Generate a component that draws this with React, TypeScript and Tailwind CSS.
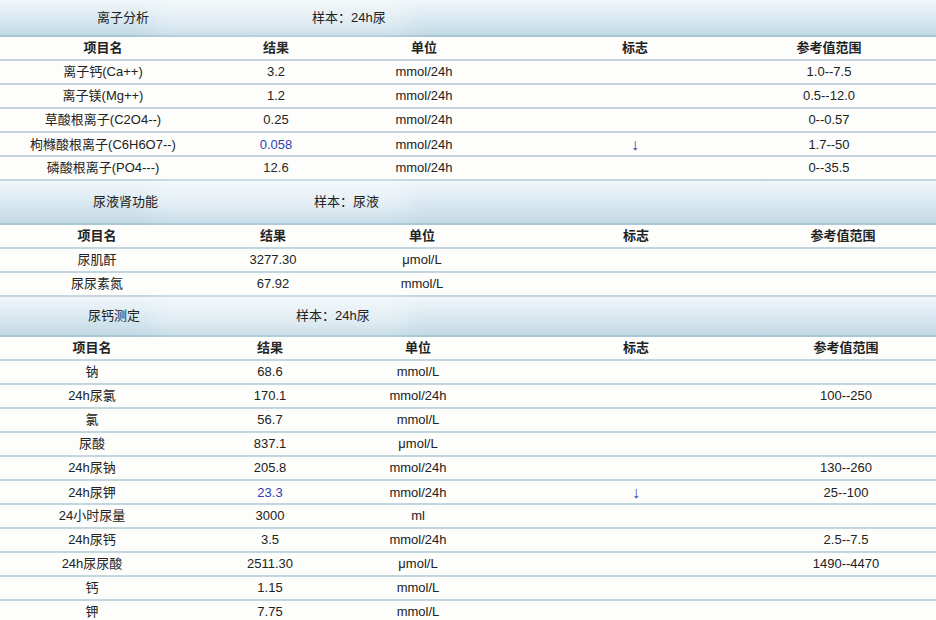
import React from "react";

type Row = { n: string; r: string; u: string; f?: string; ref?: string; blue?: boolean; h?: boolean };

const Band = ({ title, sample, h, tx, sx }: { title: string; sample: string; h: string; tx: string; sx: string }) => (
  <div className={`relative ${h} bg-gradient-to-b from-[#f2f7fa] via-[#dae9f1] to-[#c3dae6] border-b-2 border-[#a9c7d6] flex items-center text-[13px] text-[#222]`}>
    <div className="absolute left-[150px] top-[4px] w-[260px] h-[28px] rounded-full bg-white/40 blur-md" />
    <span className={`relative ${tx}`}>{title}</span>
    <span className={`relative ${sx}`}>{sample}</span>
  </div>
);

const Table = ({ cols, rows }: { cols: string; rows: Row[] }) => (
  <div>
    {[{ n: "项目名", r: "结果", u: "单位", f: "标志", ref: "参考值范围", h: true } as Row, ...rows].map((row, i) => (
      <div key={i} className={`grid ${cols} h-[24px] border-b-2 border-[#c2d6e0] items-center text-center text-[13px] text-[#222] ${row.h ? "font-bold" : ""}`}>
        <div>{row.n}</div>
        <div className={row.blue ? "text-[#2f3fb6]" : ""}>{row.r}</div>
        <div>{row.u}</div>
        <div className={row.h ? "" : "text-[#2f3fb6] text-[16px]"}>{row.f}</div>
        <div>{row.ref}</div>
        <div />
      </div>
    ))}
  </div>
);

export default function App() {
  const r1: Row[] = [
    { n: "离子钙(Ca++)", r: "3.2", u: "mmol/24h", ref: "1.0--7.5" },
    { n: "离子镁(Mg++)", r: "1.2", u: "mmol/24h", ref: "0.5--12.0" },
    { n: "草酸根离子(C2O4--)", r: "0.25", u: "mmol/24h", ref: "0--0.57" },
    { n: "枸橼酸根离子(C6H6O7--)", r: "0.058", u: "mmol/24h", f: "↓", ref: "1.7--50", blue: true },
    { n: "磷酸根离子(PO4---)", r: "12.6", u: "mmol/24h", ref: "0--35.5" },
  ];
  const r2: Row[] = [
    { n: "尿肌酐", r: "3277.30", u: "μmol/L" },
    { n: "尿尿素氮", r: "67.92", u: "mmol/L" },
  ];
  const r3: Row[] = [
    { n: "钠", r: "68.6", u: "mmol/L" },
    { n: "24h尿氯", r: "170.1", u: "mmol/24h", ref: "100--250" },
    { n: "氯", r: "56.7", u: "mmol/L" },
    { n: "尿酸", r: "837.1", u: "μmol/L" },
    { n: "24h尿钠", r: "205.8", u: "mmol/24h", ref: "130--260" },
    { n: "24h尿钾", r: "23.3", u: "mmol/24h", f: "↓", ref: "25--100", blue: true },
    { n: "24小时尿量", r: "3000", u: "ml" },
    { n: "24h尿钙", r: "3.5", u: "mmol/24h", ref: "2.5--7.5" },
    { n: "24h尿尿酸", r: "2511.30", u: "μmol/L", ref: "1490--4470" },
    { n: "钙", r: "1.15", u: "mmol/L" },
    { n: "钾", r: "7.75", u: "mmol/L" },
  ];
  return (
    <div className="w-[936px] h-[620px] overflow-hidden bg-[#fdfdfb]" style={{ fontFamily: '"Liberation Sans", "Noto Sans CJK SC", sans-serif' }}>
      <Band title="离子分析" sample="样本：24h尿" h="h-[37px]" tx="ml-[97px]" sx="ml-[163px]" />
      <Table cols="grid-cols-[206px_140px_156px_266px_122px_1fr]" rows={r1} />
      <Band title="尿液肾功能" sample="样本：尿液" h="h-[44px]" tx="ml-[93px]" sx="ml-[156px]" />
      <Table cols="grid-cols-[194px_158px_140px_288px_126px_1fr]" rows={r2} />
      <Band title="尿钙测定" sample="样本：24h尿" h="h-[40px]" tx="ml-[88px]" sx="ml-[156px]" />
      <Table cols="grid-cols-[184px_172px_124px_312px_108px_1fr]" rows={r3} />
    </div>
  );
}
